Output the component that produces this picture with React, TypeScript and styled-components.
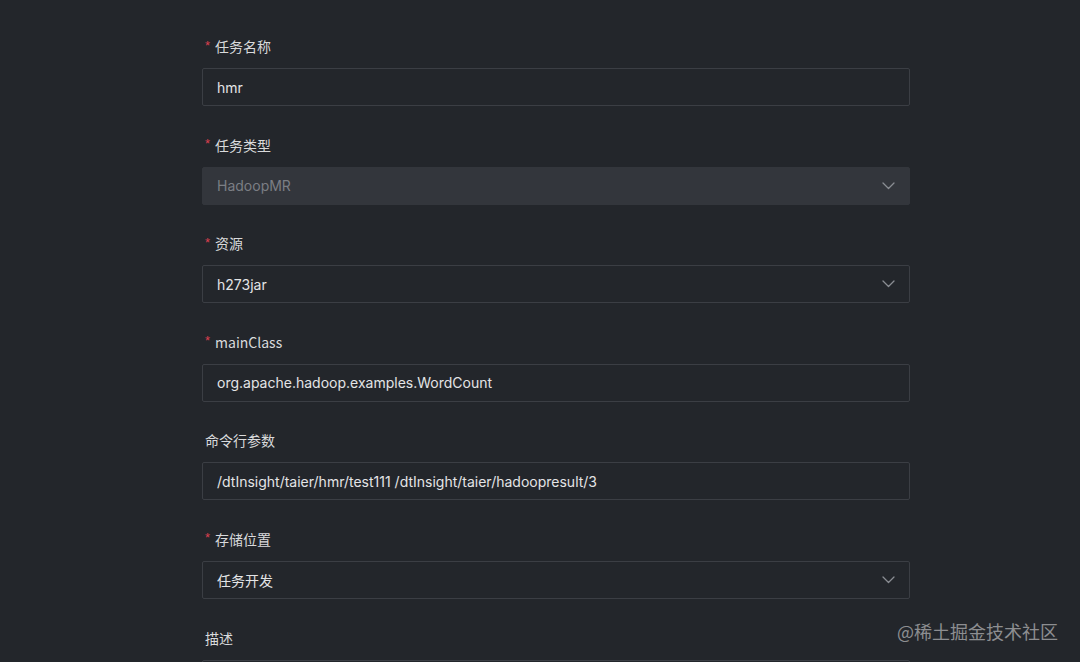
import React from 'react'
import styled, { createGlobalStyle } from 'styled-components'

const GlobalStyle = createGlobalStyle`
    html, body {
        margin: 0;
        padding: 0;
        background: #23262b;
        font-family: "Liberation Sans", "Noto Sans CJK SC", sans-serif;
    }
    #root {
        min-height: 662px;
    }
`

type Field = {
    label: string
    value: string
    required?: boolean
    select?: boolean
    disabled?: boolean
}

const fields: Field[] = [
    { label: '任务名称', value: 'hmr', required: true },
    { label: '任务类型', value: 'HadoopMR', required: true, select: true, disabled: true },
    { label: '资源', value: 'h273jar', required: true, select: true },
    { label: 'mainClass', value: 'org.apache.hadoop.examples.WordCount', required: true },
    { label: '命令行参数', value: '/dtInsight/taier/hmr/test111 /dtInsight/taier/hadoopresult/3' },
    { label: '存储位置', value: '任务开发', required: true, select: true },
    { label: '描述', value: '' },
]

const Chevron = () => (
    <svg width="13" height="8" viewBox="0 0 13 8" fill="none">
        <path d="M1 1l5.5 5.5L12 1" stroke="#8a8d93" strokeWidth="1.3" strokeLinecap="round" strokeLinejoin="round" />
    </svg>
)

const App = () => {
    return (
        <Page>
            <GlobalStyle />
            <Form>
                {fields.map((f) => (
                    <Item key={f.label}>
                        <Label>
                            {f.required && <Star>*</Star>}
                            {f.label}
                        </Label>
                        <Control disabled={f.disabled}>
                            <Value disabled={f.disabled}>{f.value}</Value>
                            {f.select && <Chevron />}
                        </Control>
                    </Item>
                ))}
            </Form>
            <Watermark>@稀土掘金技术社区</Watermark>
        </Page>
    )
}

const Page = styled.div`
    position: relative;
    width: 1080px;
    height: 662px;
    overflow: hidden;
    background: #23262b;
`

const Form = styled.div`
    display: flex;
    flex-direction: column;
    gap: 27.6px;
    padding: 35px 0 0 202px;
    width: 708px;
`

const Item = styled.div`
    display: flex;
    flex-direction: column;
    gap: 11px;
`

const Label = styled.div`
    display: flex;
    align-items: center;
    height: 22px;
    font-size: 14px;
    color: #d9dadc;
    padding-left: 3px;
    font-family: "Noto Sans CJK SC", "Liberation Sans", sans-serif;
`

const Star = styled.span`
    color: #dc3f4f;
    font-size: 13px;
    margin-right: 5px;
    margin-top: -2px;
    font-family: "Liberation Sans", sans-serif;
`

const Control = styled.div<{ disabled?: boolean }>`
    box-sizing: border-box;
    height: 38px;
    display: flex;
    align-items: center;
    justify-content: space-between;
    padding: 0 14px 0 14px;
    border: 1px solid ${(p) => (p.disabled ? '#33363c' : '#3b3e44')};
    border-radius: 2px;
    background: ${(p) => (p.disabled ? '#33363c' : '#23262b')};
`

const Value = styled.span<{ disabled?: boolean }>`
    font-size: 14px;
    color: ${(p) => (p.disabled ? '#7b7e84' : '#e3e4e6')};
    font-family: Inter, "Noto Sans CJK SC", sans-serif;
`

const Watermark = styled.div`
    position: absolute;
    right: 22px;
    top: 618px;
    font-size: 18px;
    color: #8d8e91;
    font-family: "Noto Sans CJK SC", sans-serif;
`

export default App
